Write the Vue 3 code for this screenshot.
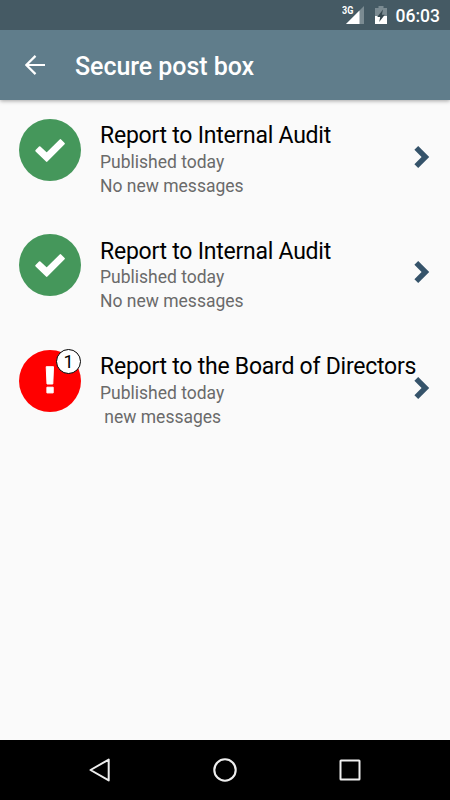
<template>
  <div class="screen">
    <div class="status-bar">
      <svg class="signal" width="18" height="18" viewBox="0 0 18 18">
        <path d="M18 0V18H0Z" fill="#7b8b92" />
        <path d="M13.5 4.5V18H0Z" fill="#fff" />
      </svg>
      <span class="network">3G</span>
      <svg class="battery" width="12" height="18" viewBox="0 0 12 18">
        <path d="M3.5 0H8.5V2H12V18H0V2H3.5Z" fill="#7b8b92" />
        <path d="M0 10H12V18H0Z" fill="#fff" />
        <path d="M8 3.5L2.2 11H5.2L4.2 16L9.8 8.8H6.9Z" fill="#35474f" />
      </svg>
      <span class="clock">06:03</span>
    </div>

    <header class="toolbar">
      <svg class="back" width="20" height="20" viewBox="0 0 20 20">
        <path d="M20 10H1.5M10.5 .9L1.4 10L10.5 19.1" fill="none" stroke="#fff" stroke-width="2.2" />
      </svg>
      <h1>Secure post box</h1>
    </header>

    <main class="list">
      <div class="item" v-for="(post, index) in posts" :key="index">
        <div class="icon">
          <svg width="62" height="62" viewBox="0 0 62 62">
            <circle cx="31" cy="31" r="31" :fill="post.alert ? '#ff0000' : '#45975b'" />
            <g v-if="post.alert" fill="#fff" stroke="#fff" stroke-linejoin="round">
              <path d="M27.2 16.7H34.5L33.8 34H28Z" />
              <path d="M27.9 37.2H34.2V42.9H27.9Z" />
            </g>
            <path
              v-else
              d="M17.3 31.7L20.7 28.3L27.7 34.8L41.4 21.1L44.9 24.6L27.7 41.9Z"
              fill="#fff"
              stroke="#fff"
              stroke-width="2"
              stroke-linejoin="round"
            />
          </svg>
          <span class="badge" v-if="post.count">{{ post.count }}</span>
        </div>
        <div class="content">
          <h2>{{ post.title }}</h2>
          <p>{{ post.date }}</p>
          <p>{{ post.messages }}</p>
        </div>
        <svg class="chevron" width="16" height="24" viewBox="0 0 16 24">
          <path d="M4.2 1L15.2 12L4.2 23L.4 19.2L7.6 12L.4 4.8Z" fill="#35536a" />
        </svg>
      </div>
    </main>

    <nav class="nav-bar">
      <svg width="24" height="26" viewBox="0 0 24 26">
        <path d="M20.7 2.6V23.4L2.5 13Z" fill="none" stroke="#eee" stroke-width="2" stroke-linejoin="round" />
      </svg>
      <svg width="24" height="26" viewBox="0 0 24 26">
        <circle cx="12" cy="13" r="10.7" fill="none" stroke="#eee" stroke-width="2.1" />
      </svg>
      <svg width="24" height="26" viewBox="0 0 24 26">
        <rect x="2.5" y="3.5" width="19" height="19" rx=".5" fill="none" stroke="#eee" stroke-width="2" />
      </svg>
    </nav>
  </div>
</template>

<script setup>
const posts = [
  { title: 'Report to Internal Audit', date: 'Published today', messages: 'No new messages' },
  { title: 'Report to Internal Audit', date: 'Published today', messages: 'No new messages' },
  {
    title: 'Report to the Board of Directors',
    date: 'Published today',
    messages: ' new messages',
    alert: true,
    count: 1
  }
]
</script>

<style>
body {
  margin: 0;
}
</style>

<style scoped>
.screen {
  display: flex;
  flex-direction: column;
  width: 450px;
  height: 800px;
  overflow: hidden;
  background: #fafafa;
  font-family: Roboto, sans-serif;
}

.status-bar {
  position: relative;
  display: flex;
  align-items: flex-start;
  justify-content: flex-end;
  box-sizing: border-box;
  height: 30px;
  padding: 6px 10px 0 0;
  background: #455a64;
  color: #fff;
}

.signal {
  margin-right: 11px;
}

/* Sits over the corner of the signal triangle */
.network {
  position: absolute;
  left: 342px;
  top: 4px;
  font-size: 11px;
  line-height: 13px;
  font-weight: 700;
  transform: scaleX(0.82);
  transform-origin: left;
}

.battery {
  margin-right: 9px;
}

.clock {
  font-size: 17.5px;
  font-weight: 500;
  line-height: 20px;
}

.toolbar {
  display: flex;
  align-items: center;
  box-sizing: border-box;
  height: 70px;
  flex: none;
  padding-left: 25px;
  background: #607d8b;
  box-shadow: 0 1px 4px rgba(0, 0, 0, 0.35);
}

.toolbar h1 {
  margin: 3px 0 0 30px;
  color: #fff;
  font-size: 25px;
  font-weight: 500;
  line-height: 30px;
  letter-spacing: -0.05px;
}

.list {
  flex: 1;
  padding-top: 19px;
}

.item {
  display: flex;
  height: 115.4px;
  padding: 0 20px 0 19px;
}

.icon {
  position: relative;
  width: 62px;
  height: 62px;
  flex: none;
}

.icon svg {
  display: block;
}

.badge {
  position: absolute;
  left: 37px;
  top: -0.5px;
  box-sizing: border-box;
  width: 25px;
  height: 25px;
  border: 1.3px solid #000;
  border-radius: 50%;
  background: #fff;
  color: #000;
  font-size: 18px;
  line-height: 24px;
  text-align: center;
}

.content {
  flex: 1;
  width: 0;
  margin-left: 19px;
  white-space: pre;
}

.content h2 {
  margin: 2.3px 0 -0.3px;
  color: #000;
  font-size: 23px;
  font-weight: 400;
  line-height: 29px;
  letter-spacing: -0.24px;
}

.content p {
  margin: 0;
  color: #6a6a6a;
  font-size: 17.5px;
  line-height: 24px;
}

.chevron {
  flex: none;
  margin-top: 26px;
}

.nav-bar {
  display: flex;
  align-items: center;
  justify-content: center;
  gap: 101px;
  height: 60px;
  background: #000;
}
</style>
